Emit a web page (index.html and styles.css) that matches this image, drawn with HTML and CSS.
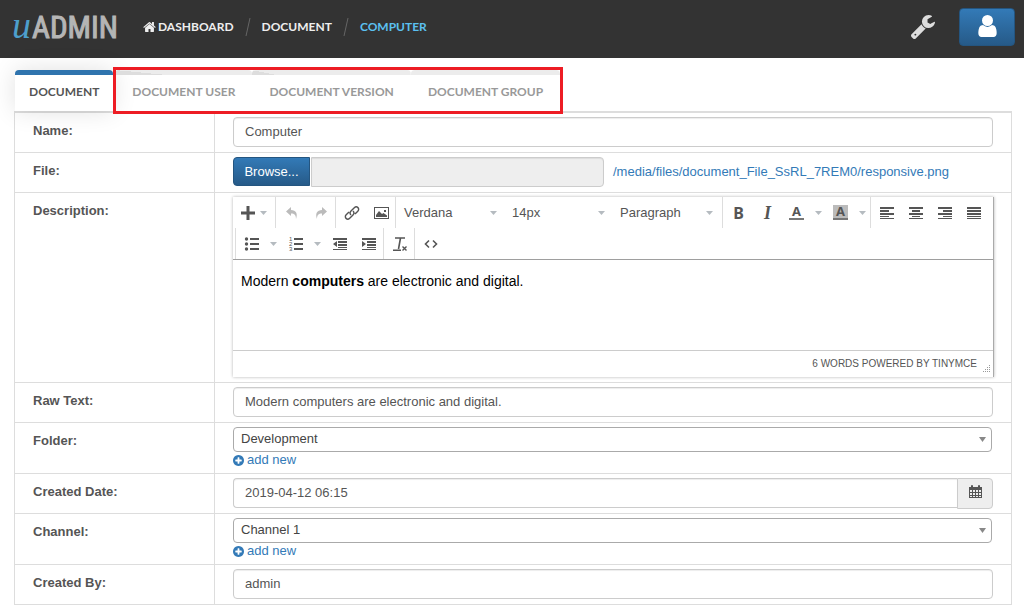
FILE: index.html
```html
<!DOCTYPE html>
<html lang="en">
<head>
<meta charset="utf-8">
<meta name="viewport" content="width=device-width, initial-scale=1">
<title>uAdmin - Computer</title>
<link rel="stylesheet" href="styles.css">
</head>
<body>
<svg class="sprite" aria-hidden="true">
  <symbol id="caret" viewBox="0 0 7 4" preserveAspectRatio="none"><path d="M0 0h7L3.500 4z"/></symbol>
  <symbol id="plus-circle" viewBox="128 128 1536 1536"><path d="M1344 960v-128q0-26-19-45t-45-19h-256v-256q0-26-19-45t-45-19h-128q-26 0-45 19t-19 45v256h-256q-26 0-45 19t-19 45v128q0 26 19 45t45 19h256v256q0 26 19 45t45 19h128q26 0 45-19t19-45v-256h256q26 0 45-19t19-45zm320-64q0 209-103 385.500t-279.500 279.500-385.500 103-385.500-103-279.500-279.500-103-385.500 103-385.500 279.500-279.500 385.500-103 385.500 103 279.500 279.500 103 385.500z"/></symbol>
</svg>

<header class="topbar">
  <a class="logo" href="#"><span class="logo-u">u</span><span class="logo-name">ADMIN</span></a>
  <nav class="crumbs" aria-label="Breadcrumb">
    <a class="crumb" href="#"><svg class="home" viewBox="64 240 1664 1296"><path d="M1472 992v480q0 26-19 45t-45 19h-384v-384h-256v384h-384q-26 0-45-19t-19-45v-480q0-1 .5-3t.5-3l575-474 575 474q1 2 1 6zm223-69l-62 74q-8 9-21 11h-3q-13 0-21-7l-692-577-692 577q-12 8-24 7-13-2-21-11l-62-74q-8-10-7-23.500t11-21.500l719-599q32-26 76-26t76 26l244 204v-195q0-14 9-23t23-9h192q14 0 23 9t9 23v408l219 182q10 8 11 21.500t-7 23.500z"/></svg>DASHBOARD</a>
    <svg class="slash" viewBox="0 0 6 18"><path d="M5 0L1 18"/></svg>
    <a class="crumb" href="#">DOCUMENT</a>
    <svg class="slash" viewBox="0 0 6 18"><path d="M5 0L1 18"/></svg>
    <a class="crumb crumb-current" href="#" aria-current="page">COMPUTER</a>
  </nav>
  <div class="actions">
    <button class="tool" type="button" aria-label="Settings"><svg class="wrench" viewBox="85 128 1643 1643"><path d="M448 1472q0-26-19-45t-45-19-45 19-19 45 19 45 45 19 45-19 19-45zm644-420l-682 682q-37 37-90 37-52 0-91-37l-106-108q-38-36-38-90 0-53 38-91l681-681q39 98 114.500 173.500t173.500 114.500zm634-435q0 39-23 106-47 134-164.500 217.500t-258.500 83.500q-185 0-316.500-131.500t-131.500-316.500 131.500-316.500 316.500-131.500q58 0 121.500 16.500t107.500 46.500q16 11 16 28t-16 28l-293 169v224l193 107q5-3 79-48.500t135.500-81 70.500-35.500q15 0 23.500 10t8.500 25z"/></svg></button>
    <button class="account" type="button" aria-label="Account"><svg class="person" viewBox="256 128 1280 1536"><path d="M1536 1399q0 109-62.500 187t-150.500 78h-854q-88 0-150.500-78t-62.500-187q0-85 8.500-160.500t31.500-152 58.500-131 94-89 134.500-34.500q131 128 313 128t313-128q76 0 134.500 34.500t94 89 58.500 131 31.500 152 8.500 160.500zm-256-887q0 159-112.500 271.500t-271.500 112.500-271.500-112.500-112.500-271.500 112.500-271.500 271.500-112.500 271.500 112.500 112.500 271.500z"/></svg></button>
  </div>
</header>

<main class="page">
  <nav class="tabs" aria-label="Document sections">
    <a class="tab tab-active" href="#">DOCUMENT</a>
    <div class="tab-group">
      <a class="tab tab-folded" href="#">DOCUMENT USER</a>
      <a class="tab tab-folded-small" href="#">DOCUMENT VERSION</a>
      <a class="tab" href="#">DOCUMENT GROUP</a>
    </div>
  </nav>

  <table class="form">
    <tr>
      <th scope="row"><label for="name">Name:</label></th>
      <td><input class="field" id="name" type="text" value="Computer"></td>
    </tr>
    <tr>
      <th scope="row"><label for="file">File:</label></th>
      <td>
        <div class="file">
          <button class="browse" type="button">Browse...</button>
          <input class="field file-name" id="file" type="text" readonly>
          <a class="file-link" href="#">/media/files/document_File_SsRL_7REM0/responsive.png</a>
        </div>
      </td>
    </tr>
    <tr>
      <th scope="row"><span id="description-label">Description:</span></th>
      <td>
        <div class="editor">
          <div class="toolbar">
            <div class="toolrow">
              <div class="group"><button class="btn btn-insert" type="button" aria-label="Insert"><svg class="ico" viewBox="0 0 16 16"><path d="M6.500 1h3v5.500H15v3H9.500V15h-3V9.500H1v-3h5.500z"/></svg><svg class="caret"><use href="#caret"/></svg></button></div>
              <div class="group">
                <button class="btn faded" type="button" aria-label="Undo"><svg class="ico" viewBox="0 0 16 16"><path d="M2 6.500L7 2v3c5 0 7 3.500 5 9 0-4-1.500-5.500-5-5.500V11z"/></svg></button>
                <button class="btn faded" type="button" aria-label="Redo"><svg class="ico" viewBox="0 0 16 16"><path d="M14 6.500L9 2v3c-5 0-7 3.500-5 9 0-4 1.500-5.500 5-5.500V11z"/></svg></button>
              </div>
              <div class="group">
                <button class="btn" type="button" aria-label="Link"><svg class="ico line" viewBox="0 0 16 16"><path d="M7 10C5.500 8.500 5.800 7.300 7 6.100l3.300-3.300c2.500-2.500 6 .9 3.500 3.400L11 9M9 6c1.500 1.500 1.200 2.700 0 3.900l-3.300 3.300c-2.500 2.500-6-.9-3.500-3.400L5 7"/></svg></button>
                <button class="btn" type="button" aria-label="Image"><svg class="ico" viewBox="0 0 16 16"><path fill-rule="evenodd" d="M1 2h15v12H1zM2 3v10h13V3zM3 12V10l3-4 3 3 1.500-1L14 10.500V12zM11 5h2v2h-2z"/></svg></button>
              </div>
              <div class="group group-lists">
                <button class="list" type="button">Verdana<svg class="caret"><use href="#caret"/></svg></button>
                <button class="list" type="button">14px<svg class="caret"><use href="#caret"/></svg></button>
                <button class="list" type="button">Paragraph<svg class="caret"><use href="#caret"/></svg></button>
              </div>
              <div class="group">
                <button class="btn glyph-b" type="button" aria-label="Bold">B</button>
                <button class="btn glyph-i" type="button" aria-label="Italic">I</button>
                <button class="btn" type="button" aria-label="Text color"><span class="color-a">A</span></button>
                <button class="drop" type="button" aria-label="Text color options"><svg class="caret"><use href="#caret"/></svg></button>
                <button class="btn" type="button" aria-label="Background color"><span class="color-a color-bg">A</span></button>
                <button class="drop" type="button" aria-label="Background color options"><svg class="caret"><use href="#caret"/></svg></button>
              </div>
              <div class="group">
                <button class="btn" type="button" aria-label="Align left"><svg class="ico" viewBox="0 0 16 16"><path d="M1 2h14v2H1zM1 5h9v2H1zM1 8h14v2H1zM1 11h9v1H1zM1 13h14v1H1z"/></svg></button>
                <button class="btn" type="button" aria-label="Align center"><svg class="ico" viewBox="0 0 16 16"><path d="M1 2h14v2H1zM4 5h8v2H4zM1 8h14v2H1zM4 11h8v1H4zM1 13h14v1H1z"/></svg></button>
                <button class="btn" type="button" aria-label="Align right"><svg class="ico" viewBox="0 0 16 16"><path d="M1 2h14v2H1zM6 5h9v2H6zM1 8h14v2H1zM6 11h9v1H6zM1 13h14v1H1z"/></svg></button>
                <button class="btn" type="button" aria-label="Justify"><svg class="ico" viewBox="0 0 16 16"><path d="M1 2h14v2H1zM1 5h14v2H1zM1 8h14v2H1zM1 11h14v1H1zM1 13h14v1H1z"/></svg></button>
              </div>
            </div>
            <div class="toolrow toolrow-second">
              <div class="group">
                <button class="btn" type="button" aria-label="Bullet list"><svg class="ico" viewBox="0 0 16 16"><circle cx="2.500" cy="3" r="1.700"/><circle cx="2.500" cy="8" r="1.700"/><circle cx="2.500" cy="13" r="1.700"/><path d="M6 2h9v2H6zM6 7h9v2H6zM6 12h9v2H6z"/></svg></button>
                <button class="drop" type="button" aria-label="Bullet list options"><svg class="caret"><use href="#caret"/></svg></button>
                <button class="btn" type="button" aria-label="Numbered list"><svg class="ico" viewBox="0 0 16 16"><text class="num" x="1" y="5">1</text><text class="num" x="1" y="10">2</text><text class="num" x="1" y="15">3</text><path d="M6 2h9v2H6zM6 7h9v2H6zM6 12h9v2H6z"/></svg></button>
                <button class="drop" type="button" aria-label="Numbered list options"><svg class="caret"><use href="#caret"/></svg></button>
                <button class="btn" type="button" aria-label="Decrease indent"><svg class="ico" viewBox="0 0 16 16"><path d="M1 2h14v2H1zM6 5h9v2H6zM6 8h9v2H6zM6 11h9v1H6zM1 13h14v1H1zM5 5v6L1 8z"/></svg></button>
                <button class="btn" type="button" aria-label="Increase indent"><svg class="ico" viewBox="0 0 16 16"><path d="M1 2h14v2H1zM6 5h9v2H6zM6 8h9v2H6zM6 11h9v1H6zM1 13h14v1H1zM1 5v6l4-3z"/></svg></button>
              </div>
              <div class="group"><button class="btn" type="button" aria-label="Clear formatting"><svg class="ico line" viewBox="0 0 16 16"><path class="thick" d="M3 2h10M8.500 2L6.500 13M1 14.200h8"/><path d="M10.500 10.500l4 4M14.500 10.500l-4 4"/></svg></button></div>
              <div class="group"><button class="btn" type="button" aria-label="Source code"><svg class="ico line" viewBox="0 0 16 16"><path class="thick" d="M6 4.500L2.500 8L6 11.500M10 4.500L13.500 8L10 11.500"/></svg></button></div>
            </div>
          </div>
          <div class="content" contenteditable="true" role="textbox" aria-labelledby="description-label" spellcheck="false">Modern <b>computers</b> are electronic and digital.</div>
          <div class="status">6 WORDS POWERED BY TINYMCE<svg class="grip" viewBox="0 0 8 8"><path d="M6 0h1v1H6zM6 2h1v1H6zM4 2h1v1H4zM6 4h1v1H6zM4 4h1v1H4zM2 4h1v1H2zM6 6h1v1H6zM4 6h1v1H4zM2 6h1v1H2zM0 6h1v1H0z"/></svg></div>
        </div>
      </td>
    </tr>
    <tr>
      <th scope="row"><label for="raw">Raw Text:</label></th>
      <td><input class="field" id="raw" type="text" value="Modern computers are electronic and digital."></td>
    </tr>
    <tr>
      <th scope="row"><label for="folder">Folder:</label></th>
      <td>
        <div class="pick"><select class="select" id="folder"><option>Development</option></select><svg class="caret pick-caret"><use href="#caret"/></svg></div>
        <a class="add" href="#"><svg class="plus"><use href="#plus-circle"/></svg>add new</a>
      </td>
    </tr>
    <tr>
      <th scope="row"><label for="created">Created Date:</label></th>
      <td>
        <div class="date">
          <input class="field date-field" id="created" type="text" value="2019-04-12 06:15">
          <button class="date-button" type="button" aria-label="Choose date"><svg class="calendar" viewBox="0 0 13 14"><path fill-rule="evenodd" d="M0 2h2V1q0-1 1-1t1 1v1h5V1q0-1 1-1t1 1v1h2v11H0zM1 5v2h2V5zM4 5v2h2V5zM7 5v2h2V5zM10 5v2h2V5zM1 8v2h2V8zM4 8v2h2V8zM7 8v2h2V8zM10 8v2h2V8zM1 11v1h2v-1zM4 11v1h2v-1zM7 11v1h2v-1zM10 11v1h2v-1z"/></svg></button>
        </div>
      </td>
    </tr>
    <tr>
      <th scope="row"><label for="channel">Channel:</label></th>
      <td>
        <div class="pick"><select class="select" id="channel"><option>Channel 1</option></select><svg class="caret pick-caret"><use href="#caret"/></svg></div>
        <a class="add" href="#"><svg class="plus"><use href="#plus-circle"/></svg>add new</a>
      </td>
    </tr>
    <tr>
      <th scope="row"><label for="author">Created By:</label></th>
      <td><input class="field" id="author" type="text" value="admin"></td>
    </tr>
  </table>
</main>
</body>
</html>
```

FILE: styles.css
```css
* { box-sizing: border-box; }

body {
  margin: 0;
  background: #fff;
  color: #555;
  font: 13px/18px "Liberation Sans", Arial, sans-serif;
}

a { color: #337ab7; text-decoration: none; }
button, input, select { font: inherit; color: inherit; margin: 0; }
button { padding: 0; border: 0; background: none; cursor: pointer; }
svg { display: block; flex: none; fill: currentColor; }
.sprite { position: absolute; width: 0; height: 0; }

/* Top bar */
.topbar {
  display: flex;
  align-items: center;
  height: 58px;
  padding: 0 9px 5px 12px;
  background: #333;
}
.logo { display: flex; align-items: baseline; width: 131px; color: #b5b5b5; line-height: 40px; }
.logo-u { width: 20px; color: #4d9fcc; font: italic 38px/40px "Liberation Serif", serif; }
.logo-name { font: 31px/40px "Liberation Sans Narrow", "Roboto Condensed", sans-serif; -webkit-text-stroke: 1px #b5b5b5; }
.crumbs { display: flex; align-items: center; gap: 11px; font: bold 12px/18px Lato, sans-serif; }
.crumb { display: flex; align-items: center; gap: 2px; color: #eee; }
.crumb-current { color: #5bc0f0; }
.home { width: 13px; height: 10px; }
.slash { width: 6px; height: 18px; fill: none; stroke: #666; }
.actions { display: flex; align-items: center; gap: 24px; margin-left: auto; color: #ddd; }
.wrench { width: 24px; height: 24px; }
.account {
  display: grid;
  place-items: center;
  width: 56px;
  height: 38px;
  padding-bottom: 2px;
  border: 1px solid #245580;
  border-radius: 4px;
  background: linear-gradient(#337ab7, #265a88);
  color: #fff;
}
.person { width: 19px; height: 22px; }

/* Tabs */
.page { padding: 12px 12px 12px 14px; }
.tabs { display: flex; padding-left: 1px; font: bold 12px/18px Lato, sans-serif; }
.tab-group { position: relative; display: flex; padding-left: 2px; }
.tab-group::after {
  content: "";
  position: absolute;
  inset: -3px -3px -3px 0;
  border: 3px solid #ed1c24;
  pointer-events: none;
}
.tab {
  padding: 13px 17px 6px;
  height: 41px;
  border-radius: 4px 4px 0 0;
  background: linear-gradient(#ececec, #ececec) top / 100% 5px no-repeat;
  color: #999;
}
.tab-active {
  padding: 13px 14px 6px;
  background: linear-gradient(#2f74ae, #2f74ae) top / 100% 5px no-repeat #fff;
  color: #555;
  box-shadow: 0 0 24px rgba(0, 0, 0, .12);
}
.tab-folded { background: linear-gradient(to bottom left, #ececec 50%, #ddd 50%) top left / 52px 5px no-repeat, linear-gradient(#ececec, #ececec) top / 100% 5px no-repeat; }
.tab-folded-small { background: linear-gradient(to bottom left, #ececec 50%, #ddd 50%) top left / 24px 5px no-repeat, linear-gradient(#ececec, #ececec) top / 100% 5px no-repeat; }

/* Form table */
.form { width: 100%; border-collapse: collapse; border: 1px solid #ddd; border-top-width: 2px; }
.form th, .form td { padding: 4px 18px; border: 1px solid #ddd; vertical-align: top; text-align: left; }
.form tr:first-child > * { border-top-width: 2px; }
.form th { width: 200px; padding-top: 9px; font-weight: bold; }
.form td { padding-bottom: 5px; }
.field {
  display: block;
  width: 100%;
  height: 30px;
  padding: 0 11px 1px;
  border: 1px solid #ccc;
  border-radius: 4px;
  background: #fff;
  box-shadow: inset 0 1px 1px rgba(0, 0, 0, .075);
}
.file { display: flex; align-items: center; }
.browse {
  align-self: flex-start;
  width: 77px;
  height: 29px;
  margin-right: 1px;
  border: 1px solid #245580;
  border-radius: 4px 0 0 4px;
  background: linear-gradient(#337ab7, #265a88);
  color: #fff;
}
.file-name { flex: 0 1 293px; width: 0; border-radius: 0 4px 4px 0; background: #eee; }
.file-link { margin-left: 9px; }

/* Rich text editor */
.editor { margin-right: -1px; border-right: 1px solid #aaa; box-shadow: 0 0 3px rgba(0, 0, 0, .3); }
.toolbar { border-bottom: 1px solid #9e9e9e; }
.toolrow { display: flex; }
.toolrow-second { padding-left: 2px; }
.group { display: flex; height: 31px; padding-left: 1px; }
.group-lists { padding-right: 1px; }
.group + .group, .toolrow-second .group { border-left: 1px solid #ddd; }
.btn { display: grid; place-items: center; width: 29px; }
.btn-insert { display: flex; align-items: center; gap: 4px; width: 41px; padding-left: 6px; }
.faded { color: #bbb; }
.drop { display: grid; place-items: center; width: 15px; }
.ico { width: 16px; height: 16px; }
.line { fill: none; stroke: currentColor; stroke-width: 1.4; }
.thick { stroke-width: 1.6; }
.num { font: 6px "Liberation Sans", sans-serif; }
.caret { width: 7px; height: 4px; color: #b5bbc0; }
.list { display: flex; align-items: center; justify-content: space-between; width: 108px; padding: 0 8px 0 7px; }
.glyph-b { font: bold 16px/18px "Noto Sans", sans-serif; }
.glyph-i { font: italic bold 18px/18px "Liberation Serif", serif; }
.color-a { width: 15px; height: 15px; border-bottom: 2px solid #777; font: bold 13px/13px "Noto Sans", sans-serif; }
.color-bg { background: #bbb; }
.content { height: 90px; padding: 12px 8px; color: #000; font-size: 14px; outline: 0; }
.status {
  position: relative;
  height: 27px;
  padding: 4px 16px 0 0;
  border-top: 1px solid #ccc;
  font-size: 10px;
  text-align: right;
}
.grip { position: absolute; right: 2px; bottom: 4px; width: 8px; height: 8px; color: #999; }

/* Pickers */
.pick { position: relative; margin-right: 1px; }
.select {
  display: block;
  width: 100%;
  height: 25px;
  padding: 0 7px 2px;
  border: 1px solid #aaa;
  border-radius: 4px;
  background: #fff;
  color: #444;
  appearance: none;
}
.pick-caret { position: absolute; right: 6px; top: 10px; width: 7px; height: 5px; color: #888; pointer-events: none; }
.add { display: flex; align-items: center; gap: 3px; height: 16px; }
.plus { width: 11px; height: 11px; }
.date { display: flex; }
.date-field { flex: 1; width: 0; border-right: 0; border-radius: 4px 0 0 4px; }
.date-button {
  display: grid;
  place-items: center;
  width: 36px;
  height: 31px;
  margin-bottom: -1px;
  padding-bottom: 3px;
  border: 1px solid #ccc;
  border-radius: 0 4px 4px 0;
  background: #eee;
}
.calendar { width: 13px; height: 14px; }
```
